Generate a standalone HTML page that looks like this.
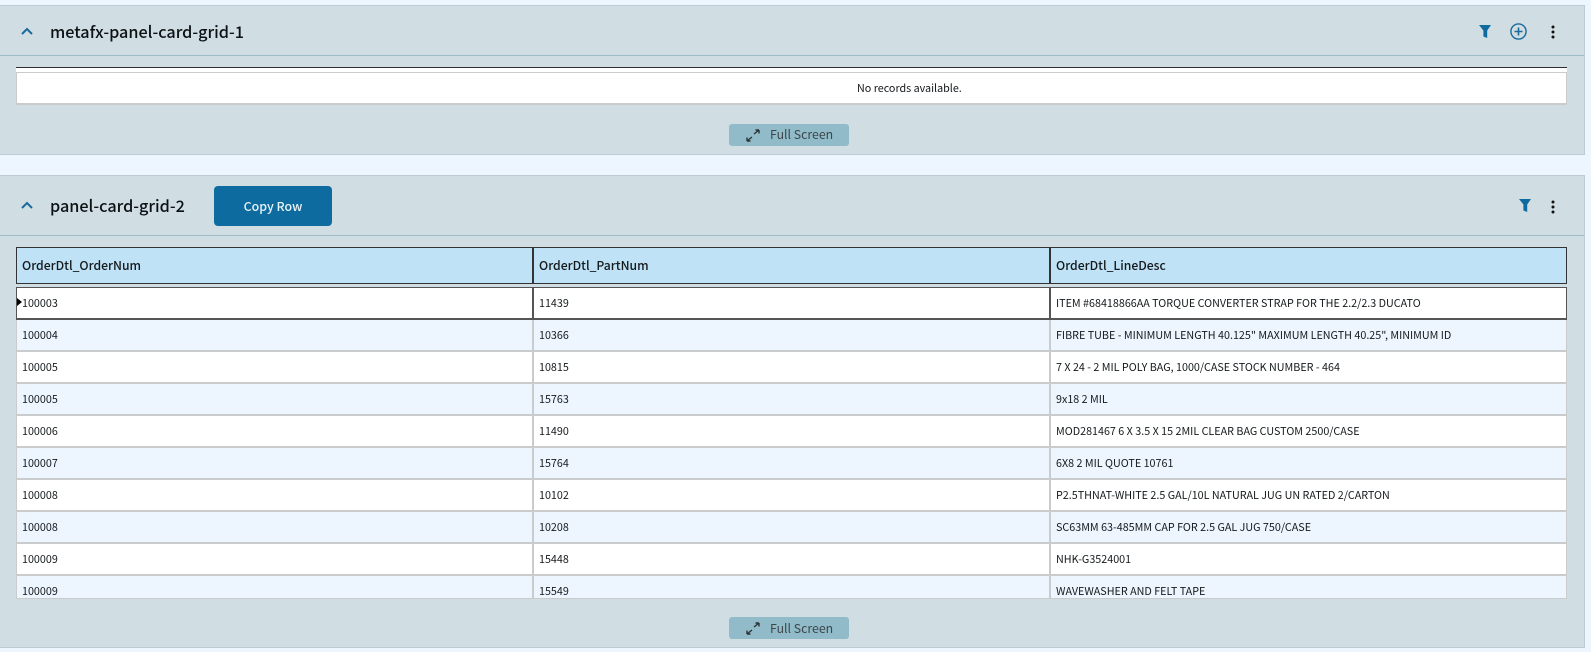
<!DOCTYPE html>
<html><head><meta charset="utf-8">
<style>
html,body{margin:0;padding:0;width:1591px;height:652px;overflow:hidden;background:#edf6fe;}
body{position:relative;font-family:"Liberation Sans","Noto Sans CJK SC",sans-serif;}
div{position:absolute;box-sizing:border-box;}
.panel{left:0;width:1585px;background:#d0dde2;border-top:1px solid #bccbd0;border-right:1px solid #bccbd0;border-bottom:1px solid #bccbd0;}
.hl{left:0;width:1584px;height:1px;background:#9dbcc6;}
.title{left:50px;font:500 16.2px/24px "Noto Sans CJK SC",sans-serif;color:#0c1114;white-space:nowrap;}
.fs{left:729px;width:120px;height:22px;background:#91bbc8;border-radius:3px;}
.fs span{position:absolute;left:41px;top:0;font:400 12.3px/20px "Noto Sans CJK SC",sans-serif;color:#3c474c;white-space:nowrap;}
.fs svg{position:absolute;left:17px;top:5px;}
.hc{top:247px;height:37px;background:#bfe2f6;border-top:1px solid #333;border-bottom:1px solid #333;font:500 12.2px/34px "Noto Sans CJK SC",sans-serif;color:#14191c;white-space:nowrap;}
.row{left:16px;width:1551px;height:32px;border-left:1px solid #c9cbcc;border-right:1px solid #c9cbcc;border-bottom:2px solid #c9cbcc;}
.c{font:400 10.75px/16px "Noto Sans CJK SC",sans-serif;color:#14191c;white-space:nowrap;margin-top:1px;}
.sep{width:2px;background:#c9cbcc;}
svg{position:absolute;}
</style></head><body>

<div class="panel" style="top:5px;height:150px;"></div>
<div class="hl" style="top:55px;"></div>
<svg style="left:20px;top:26px" width="14" height="10" viewBox="0 0 14 10"><path d="M2 8L7 3L12 8" fill="none" stroke="#1a6a9c" stroke-width="2"/></svg>
<div class="title" style="top:19px;">metafx-panel-card-grid-1</div>
<svg style="left:1479px;top:24px" width="12" height="15" viewBox="0 0 12 15"><path d="M0 1H12L8.2 6.5V14L4.4 12.5V6.5Z" fill="#0e6b9f"/></svg>
<svg style="left:1509px;top:21.5px" width="19" height="19" viewBox="0 0 19 19"><circle cx="9.5" cy="9.5" r="7.6" fill="none" stroke="#1a6a9c" stroke-width="1.4"/><path d="M9.5 5.5V13.5M5.5 9.5H13.5" stroke="#1a6a9c" stroke-width="1.6"/></svg>
<svg style="left:1551px;top:25px" width="4" height="14" viewBox="0 0 4 14"><circle cx="2" cy="2" r="1.5" fill="#111"/><circle cx="2" cy="7" r="1.5" fill="#111"/><circle cx="2" cy="12" r="1.5" fill="#111"/></svg>

<div style="left:16px;top:67px;width:1551px;height:1px;background:#2b3033;"></div>
<div style="left:16px;top:68px;width:1551px;height:37px;background:#fff;"></div>
<div style="left:16px;top:72px;width:1551px;height:1px;background:#c9cbcc;"></div>
<div style="left:16px;top:72px;width:1px;height:33px;background:#c9cbcc;"></div>
<div style="left:1566px;top:72px;width:1px;height:33px;background:#c9cbcc;"></div>
<div style="left:16px;top:103px;width:1551px;height:2px;background:#c9cbcc;"></div>
<div class="c" style="left:857px;top:80px;">No records available.</div>

<div class="fs" style="top:124px;"><svg width="14" height="13" viewBox="0 0 14 13"><path d="M8 5L13 1M13 1H9.5M13 1V4.5M6 8L1 12M1 12H4.5M1 12V8.5" fill="none" stroke="#2a3337" stroke-width="1.4"/></svg><span>Full Screen</span></div>

<div class="panel" style="top:175px;height:473px;"></div>
<div class="hl" style="top:235px;"></div>
<svg style="left:20px;top:200px" width="14" height="10" viewBox="0 0 14 10"><path d="M2 8L7 3L12 8" fill="none" stroke="#1a6a9c" stroke-width="2"/></svg>
<div class="title" style="top:193px;">panel-card-grid-2</div>
<div style="left:214px;top:186px;width:118px;height:40px;background:#0e6b9f;border-radius:4px;color:#e8f3f8;text-align:center;font:500 12.4px/40px 'Noto Sans CJK SC',sans-serif;">Copy Row</div>
<svg style="left:1519px;top:198px" width="12" height="15" viewBox="0 0 12 15"><path d="M0 1H12L8.2 6.5V14L4.4 12.5V6.5Z" fill="#0e6b9f"/></svg>
<svg style="left:1551px;top:200px" width="4" height="14" viewBox="0 0 4 14"><circle cx="2" cy="2" r="1.5" fill="#111"/><circle cx="2" cy="7" r="1.5" fill="#111"/><circle cx="2" cy="12" r="1.5" fill="#111"/></svg>

<div class="hc" style="left:16px;width:516px;border-left:1px solid #333;padding-left:5px;">OrderDtl_OrderNum</div>
<div class="hc" style="left:532px;width:517px;border-left:2px solid #333;padding-left:5px;">OrderDtl_PartNum</div>
<div class="hc" style="left:1049px;width:518px;border-left:2px solid #333;border-right:1px solid #333;padding-left:5px;">OrderDtl_LineDesc</div>

<div style="left:16px;top:284px;width:1551px;height:314px;overflow:hidden;">
<div class="row" style="left:0;top:3px;height:33px;background:#fff;border:1px solid #555;border-bottom:2px solid #555;"></div>
<div style="left:516px;top:3px;width:2px;height:32px;background:#555;"></div>
<div style="left:1033px;top:3px;width:2px;height:32px;background:#555;"></div>
<div style="left:1px;top:14px;width:0;height:0;border-left:5px solid #000;border-top:4px solid transparent;border-bottom:4px solid transparent;"></div>

<div class="row" style="left:0;top:36px;height:32px;background:#edf6fe;"></div>
<div class="row" style="left:0;top:68px;background:#fff;"></div>
<div class="row" style="left:0;top:100px;background:#edf6fe;"></div>
<div class="row" style="left:0;top:132px;background:#fff;"></div>
<div class="row" style="left:0;top:164px;background:#edf6fe;"></div>
<div class="row" style="left:0;top:196px;background:#fff;"></div>
<div class="row" style="left:0;top:228px;background:#edf6fe;"></div>
<div class="row" style="left:0;top:260px;background:#fff;"></div>
<div class="row" style="left:0;top:292px;background:#edf6fe;"></div>
<div class="sep" style="left:516px;top:36px;height:278px;"></div>
<div class="sep" style="left:1033px;top:36px;height:278px;"></div>

<div class="c" style="left:6px;top:11px;">100003</div><div class="c" style="left:523px;top:11px;">11439</div><div class="c" style="left:1040px;top:11px;">ITEM #68418866AA TORQUE CONVERTER STRAP FOR THE 2.2/2.3 DUCATO</div>
<div class="c" style="left:6px;top:43px;">100004</div><div class="c" style="left:523px;top:43px;">10366</div><div class="c" style="left:1040px;top:43px;">FIBRE TUBE - MINIMUM LENGTH 40.125" MAXIMUM LENGTH 40.25", MINIMUM ID</div>
<div class="c" style="left:6px;top:75px;">100005</div><div class="c" style="left:523px;top:75px;">10815</div><div class="c" style="left:1040px;top:75px;">7 X 24 - 2 MIL POLY BAG, 1000/CASE STOCK NUMBER - 464</div>
<div class="c" style="left:6px;top:107px;">100005</div><div class="c" style="left:523px;top:107px;">15763</div><div class="c" style="left:1040px;top:107px;">9x18 2 MIL</div>
<div class="c" style="left:6px;top:139px;">100006</div><div class="c" style="left:523px;top:139px;">11490</div><div class="c" style="left:1040px;top:139px;">MOD281467 6 X 3.5 X 15 2MIL CLEAR BAG CUSTOM 2500/CASE</div>
<div class="c" style="left:6px;top:171px;">100007</div><div class="c" style="left:523px;top:171px;">15764</div><div class="c" style="left:1040px;top:171px;">6X8 2 MIL QUOTE 10761</div>
<div class="c" style="left:6px;top:203px;">100008</div><div class="c" style="left:523px;top:203px;">10102</div><div class="c" style="left:1040px;top:203px;">P2.5THNAT-WHITE 2.5 GAL/10L NATURAL JUG UN RATED 2/CARTON</div>
<div class="c" style="left:6px;top:235px;">100008</div><div class="c" style="left:523px;top:235px;">10208</div><div class="c" style="left:1040px;top:235px;">SC63MM 63-485MM CAP FOR 2.5 GAL JUG 750/CASE</div>
<div class="c" style="left:6px;top:267px;">100009</div><div class="c" style="left:523px;top:267px;">15448</div><div class="c" style="left:1040px;top:267px;">NHK-G3524001</div>
<div class="c" style="left:6px;top:299px;">100009</div><div class="c" style="left:523px;top:299px;">15549</div><div class="c" style="left:1040px;top:299px;">WAVEWASHER AND FELT TAPE</div>
</div>
<div style="left:16px;top:598px;width:1551px;height:1px;background:#c9cbcc;"></div>

<div class="fs" style="top:617px;"><svg width="14" height="13" viewBox="0 0 14 13"><path d="M8 5L13 1M13 1H9.5M13 1V4.5M6 8L1 12M1 12H4.5M1 12V8.5" fill="none" stroke="#2a3337" stroke-width="1.4"/></svg><span style="top:1px">Full Screen</span></div>
</body></html>
